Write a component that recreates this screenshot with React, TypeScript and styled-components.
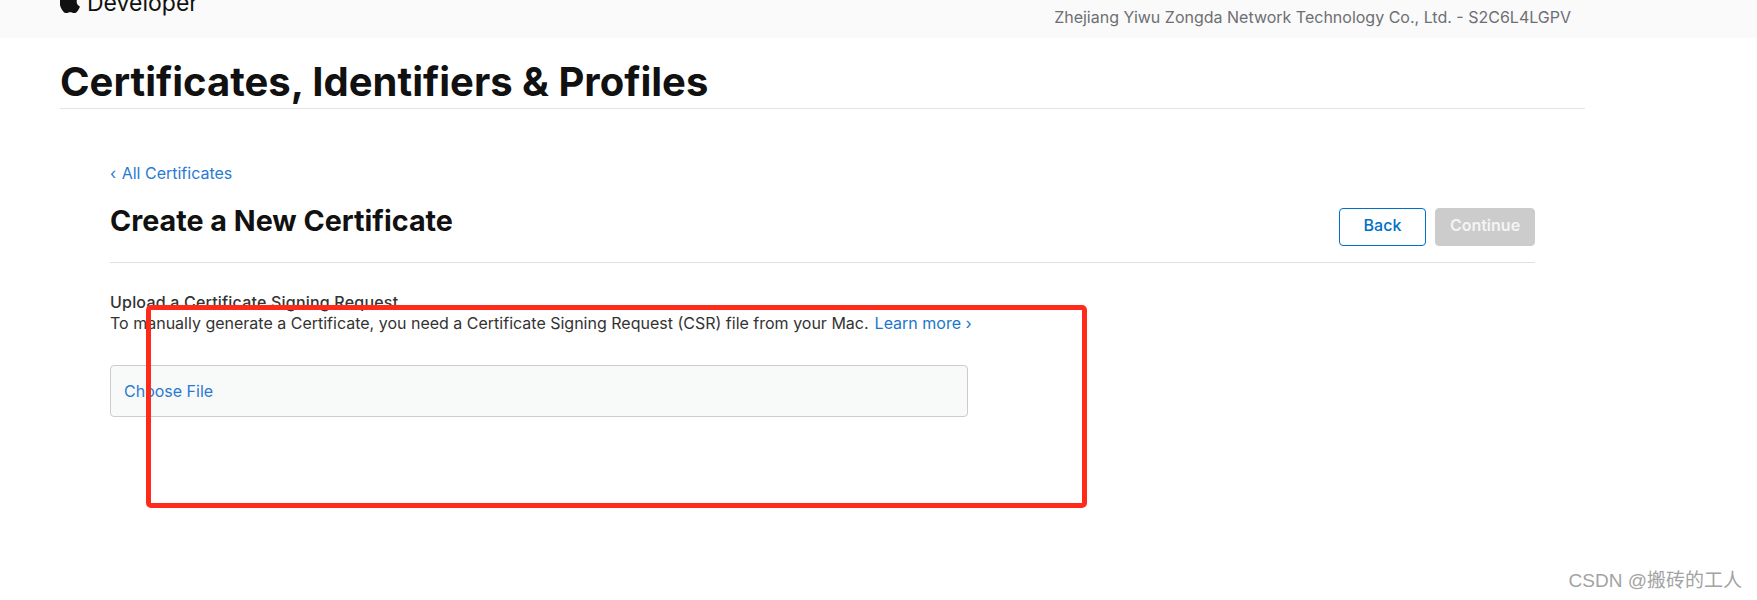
import React from "react";
import styled, { createGlobalStyle } from "styled-components";

const Global = createGlobalStyle`
  html, body { margin: 0; padding: 0; background: #fff; }
  body { font-family: Inter, "Liberation Sans", sans-serif; color: #111; }
  #root { position: relative; height: 600px; overflow: hidden; }
`;

const TopBar = styled.header`
  height: 38px;
  background: #fafafa;
  overflow: hidden;
  display: flex;
  justify-content: space-between;
  padding: 0 186px 0 60px;
`;

const Brand = styled.div`
  display: flex;
  align-items: center;
  gap: 7px;
  height: 30px;
  margin-top: -12px;
  font-size: 23px;
  color: #111;
`;

const AppleMark = styled.svg`
  align-self: flex-start;
  width: 20px;
  height: 25px;
  fill: #111;
`;

const Team = styled.div`
  font-size: 16px;
  line-height: 20px;
  margin-top: 7px;
  color: #6e6e73;
`;

const PageHead = styled.div`
  margin: 0 172px 0 60px;
  height: 71px;
  border-bottom: 1px solid #e4e4e4;
  box-sizing: border-box;
`;

const PageTitle = styled.h1`
  margin: 0;
  padding-top: 20px;
  font-size: 40px;
  line-height: 48px;
  font-weight: 700;
  color: #111;
`;

const Main = styled.main`
  margin: 0 222px 0 110px;
  padding-top: 54px;
`;

const Crumb = styled.a`
  display: block;
  font-size: 16px;
  line-height: 20px;
  color: #2a7ad2;
`;

const CrumbArrow = styled.span`
  margin-right: 1px;
`;

const HeadRow = styled.div`
  display: flex;
  justify-content: space-between;
  height: 80px;
  padding-top: 14px;
  box-sizing: border-box;
  border-bottom: 1px solid #e0e0e0;
`;

const SectionTitle = styled.h2`
  margin: 0;
  padding-top: 6px;
  font-size: 28.7px;
  line-height: 36px;
  font-weight: 700;
  color: #111;
`;

const Actions = styled.div`
  display: flex;
  gap: 9px;
  height: 38px;
  padding-top: 11px;
`;

const Button = styled.button<{ $primary?: boolean }>`
  box-sizing: border-box;
  height: 38px;
  width: ${(p) => (p.$primary ? "100px" : "87px")};
  border-radius: 4px;
  font: ${(p) => (p.$primary ? 600 : 500)} 16px Inter, sans-serif;
  border: 1px solid ${(p) => (p.$primary ? "#cccccc" : "#0070c9")};
  background: ${(p) => (p.$primary ? "#cccccc" : "#fff")};
  color: ${(p) => (p.$primary ? "#f4f4f4" : "#0070c9")};
  padding: 0 0 5px;
`;

const FieldLabel = styled.div`
  margin-top: 29px;
  font-size: 16px;
  line-height: 21px;
  font-weight: 500;
  letter-spacing: 0.2px;
  color: #333;
`;

const Help = styled.p`
  margin: 0;
  font-size: 16px;
  line-height: 21px;
  color: #333;
`;

const Link = styled.a`
  color: #1a76cc;
  margin-left: 6px;
`;

const FileBox = styled.div`
  box-sizing: border-box;
  width: 858px;
  height: 52px;
  margin-top: 31px;
  padding: 0 13px;
  display: flex;
  align-items: center;
  background: #f8f9f9;
  border: 1px solid #cccccc;
  border-radius: 4px;
  font-size: 16px;
  color: #2a7ad2;
`;

const Annotation = styled.div`
  position: absolute;
  left: 146px;
  top: 305px;
  width: 941px;
  height: 203px;
  box-sizing: border-box;
  border: 5px solid #ff2a1a;
  border-radius: 5px;
  pointer-events: none;
`;

const Watermark = styled.div`
  position: absolute;
  right: 15px;
  top: 569px;
  font: 19px/24px "Liberation Sans", "Noto Sans CJK SC", sans-serif;
  color: #a3a3a3;
`;

export default function App() {
  return (
    <>
      <Global />
      <TopBar>
        <Brand>
          <AppleMark viewBox="3.5 1.6 16.2 20.4">
            <path d="M17.05 12.54c-.03-2.6 2.12-3.85 2.22-3.91-1.21-1.77-3.09-2.01-3.76-2.04-1.6-.16-3.12.94-3.93.94-.81 0-2.06-.92-3.39-.89-1.74.03-3.35 1.01-4.25 2.57-1.81 3.14-.46 7.8 1.3 10.35.86 1.25 1.89 2.65 3.24 2.6 1.3-.05 1.79-.84 3.36-.84 1.57 0 2.01.84 3.39.81 1.4-.02 2.28-1.27 3.13-2.53.99-1.45 1.39-2.86 1.42-2.93-.03-.01-2.71-1.04-2.73-4.13zM14.47 4.9c.72-.87 1.2-2.07 1.07-3.27-1.03.04-2.28.69-3.02 1.55-.66.77-1.24 2-1.09 3.17 1.15.09 2.32-.58 3.04-1.45z" />
          </AppleMark>
          Developer
        </Brand>
        <Team>Zhejiang Yiwu Zongda Network Technology Co., Ltd. - S2C6L4LGPV</Team>
      </TopBar>
      <PageHead>
        <PageTitle>Certificates, Identifiers &amp; Profiles</PageTitle>
      </PageHead>
      <Main>
        <Crumb>
          <CrumbArrow>‹</CrumbArrow> All Certificates
        </Crumb>
        <HeadRow>
          <SectionTitle>Create a New Certificate</SectionTitle>
          <Actions>
            <Button>Back</Button>
            <Button $primary>Continue</Button>
          </Actions>
        </HeadRow>
        <FieldLabel>Upload a Certificate Signing Request</FieldLabel>
        <Help>
          To manually generate a Certificate, you need a Certificate Signing Request (CSR) file from your Mac.
          <Link>Learn more ›</Link>
        </Help>
        <FileBox>Choose File</FileBox>
      </Main>
      <Annotation />
      <Watermark>CSDN @搬砖的工人</Watermark>
    </>
  );
}
